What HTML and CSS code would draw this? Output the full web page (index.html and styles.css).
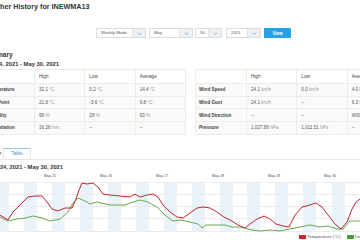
FILE: index.html
```html
<!DOCTYPE html>
<html lang="en">
<head>
    <meta charset="UTF-8">
    <title>Weather History for INEWMA13</title>
    <link rel="stylesheet" href="styles.css">
</head>
<body>
	<div class="page">
		<h1 class="title">Weather History for INEWMA13</h1>
		<div class="controls">
			<div class="select mode"><span>Weekly Mode</span><i><svg viewBox="0 0 8 5"><polyline points="1,1 4,4 7,1"/></svg></i></div>
			<div class="select month"><span>May</span><i><svg viewBox="0 0 8 5"><polyline points="1,1 4,4 7,1"/></svg></i></div>
			<div class="select day"><span>30</span><i><svg viewBox="0 0 8 5"><polyline points="1,1 4,4 7,1"/></svg></i></div>
			<div class="select year"><span>2021</span><i><svg viewBox="0 0 8 5"><polyline points="1,1 4,4 7,1"/></svg></i></div>
			<button class="view">View</button>
		</div>
		<h2 class="summary">Summary</h2>
		<h3 class="range">May 24, 2021 - May 30, 2021</h3>
		<div class="tables">
			<table class="stats">
				<tr class="head"><th></th><th>High</th><th>Low</th><th>Average</th></tr>
				<tr><td class="lbl">Temperature</td><td>32.1 <em>°C</em></td><td>0.2 <em>°C</em></td><td>14.4 <em>°C</em></td></tr>
				<tr><td class="lbl">Dew Point</td><td>21.8 <em>°C</em></td><td>-3.6 <em>°C</em></td><td>6.8 <em>°C</em></td></tr>
				<tr><td class="lbl">Humidity</td><td>99 <em>%</em></td><td>28 <em>%</em></td><td>63 <em>%</em></td></tr>
				<tr><td class="lbl">Precipitation</td><td>16.26 <em>mm</em></td><td>--</td><td>--</td></tr>
			</table>
			<table class="stats">
				<tr class="head"><th></th><th>High</th><th>Low</th><th>Average</th></tr>
				<tr><td class="lbl">Wind Speed</td><td>24.1 <em>km/h</em></td><td>0.0 <em>km/h</em></td><td>4.0 <em>km/h</em></td></tr>
				<tr><td class="lbl">Wind Gust</td><td>24.1 <em>km/h</em></td><td>--</td><td>6.3 <em>km/h</em></td></tr>
				<tr><td class="lbl">Wind Direction</td><td>--</td><td>--</td><td>WSW</td></tr>
				<tr><td class="lbl">Pressure</td><td>1,027.89 <em>hPa</em></td><td>1,011.51 <em>hPa</em></td><td>--</td></tr>
			</table>
		</div>
		<div class="tabs">
			<a class="tab current">Graph</a>
			<a class="tab boxed">Table</a>
		</div>
		<h4 class="chart-title">May 24, 2021 - May 30, 2021</h4>
		<div class="days">
			<span>May 24</span><span>May 25</span><span>May 26</span><span>May 27</span><span>May 28</span><span>May 29</span><span>May 30</span>
		</div>
		<svg class="plot" width="400" height="50" viewBox="-17 180 400 50">
			<g class="night">
				<rect x="-4" y="180" width="13" height="50"/><rect x="24" y="180" width="13" height="50"/>
				<rect x="52" y="180" width="13" height="50"/><rect x="80" y="180" width="13" height="50"/>
				<rect x="108" y="180" width="13" height="50"/><rect x="136" y="180" width="13" height="50"/>
				<rect x="164" y="180" width="13" height="50"/><rect x="192" y="180" width="13" height="50"/>
				<rect x="220" y="180" width="13" height="50"/><rect x="247" y="180" width="13" height="50"/>
				<rect x="275" y="180" width="13" height="50"/><rect x="303" y="180" width="13" height="50"/>
				<rect x="332" y="180" width="13" height="50"/>
			</g>
			<g class="grid">
				<line x1="-17" y1="180.5" x2="383" y2="180.5"/><line x1="-17" y1="192.5" x2="383" y2="192.5"/>
				<line x1="-17" y1="204.5" x2="383" y2="204.5"/><line x1="-17" y1="216.5" x2="383" y2="216.5"/>
				<line x1="-17" y1="229.5" x2="383" y2="229.5"/>
			</g>
			<polyline class="dew" points="0,215 8,219 17,217 25,216 33,214 42,216 50,219 60,217 68,210 73,201 78,196 85,199 90,202 97,200 110,203 125,203 130,201 140,198 148,200 157,205 165,213 173,219 180,218 190,220 198,222 202,226 206,223 217,223 225,223 232,225 240,225 252,228 260,229 270,228 280,229 290,227 300,225 310,223 320,225 328,224 337,227 343,227 350,219 360,219"/>
			<polyline class="temp" points="0,213 8,218 13,210 20,203 28,195 35,194 42,194 47,200 52,207 58,209 65,206 72,206 76,197 79,188 82,181 87,182 93,181 98,185 103,192 110,193 120,194 130,195 135,192 140,195 147,193 153,192 158,195 163,203 170,210 177,215 183,216 190,211 197,206 203,205 210,206 217,210 224,215 230,218 238,223 245,226 250,222 257,217 264,214 270,217 276,222 283,224 289,225 295,213 302,205 310,203 316,201 322,205 328,213 335,222 341,227 347,220 352,207 356,200 360,197"/>
		</svg>
		<div class="legend">
			<span class="key red"></span><span class="name">Temperature (°C)</span>
			<span class="key green"></span><span class="name">Dew Point (°C)</span>
		</div>
	</div>
</body>
</html>
```

FILE: styles.css
```css
	html, body {
		margin: 0;
		background: #fff;
		overflow: hidden;
	}
	body {
		font-family: "Liberation Sans", Arial, sans-serif;
		color: #333;
	}
	.page {
		margin-left: -17px;
		width: 420px;
	}
	.title {
		margin: 0;
		height: 14px;
		line-height: 14px;
		font-size: 7.2px;
		font-weight: bold;
		color: #333;
	}
	.controls {
		display: flex;
		gap: 3px;
		margin: 14px 0 0 113px;
		height: 10px;
	}
	.select {
		display: flex;
		border: 1px solid #dcdcdc;
		background: #fff;
		box-sizing: border-box;
		height: 10px;
	}
	.select span {
		flex: 1;
		font-size: 4.3px;
		line-height: 8px;
		padding-left: 4px;
		color: #555;
	}
	.select i {
		width: 12px;
		background: #eef1f4;
		border-left: 1px solid #e2e2e2;
		display: flex;
		align-items: center;
		justify-content: center;
	}
	.select svg {
		width: 5px;
		height: 3px;
		fill: none;
		stroke: #7f9fbd;
		stroke-width: 1.2;
	}
	.mode { width: 50px; }
	.month { width: 44px; }
	.day { width: 27px; margin-left: -1px; }
	.year { width: 35px; margin-left: 1px; }
	.view {
		width: 27px;
		height: 10px;
		border: 0;
		padding: 0;
		border-radius: 1px;
		background: #26a3e2;
		color: #fff;
		font-family: inherit;
		font-size: 4.5px;
		font-weight: bold;
	}
	.summary {
		margin: 12px 0 0;
		font-size: 6.5px;
		line-height: 9px;
		font-weight: bold;
	}
	.range {
		margin: 0;
		font-size: 5.8px;
		line-height: 10px;
		font-weight: bold;
	}
	.tables {
		display: flex;
		gap: 9px;
	}
	.stats {
		border-collapse: collapse;
		table-layout: fixed;
		width: 203px;
		font-size: 4.6px;
	}
	.stats th, .stats td {
		border: 1px solid #ececec;
		padding: 0 0 0 4px;
		text-align: left;
		white-space: nowrap;
		overflow: hidden;
		color: #555;
	}
	.stats th:first-child, .stats td:first-child {
		width: 46px;
	}
	.stats th {
		height: 13px;
		font-weight: normal;
		color: #444;
	}
	.stats td {
		height: 12.7px;
		box-sizing: border-box;
		background: #fafafa;
	}
	.stats td.lbl {
		font-weight: bold;
		color: #444;
		padding-left: 3px;
	}
	.stats em {
		font-style: normal;
		color: #9a9a9a;
	}
	.tabs {
		display: flex;
		margin-top: 13px;
		height: 11px;
		border-bottom: 1px solid #e6e6e6;
	}
	.tab {
		font-size: 4.8px;
		line-height: 11px;
		box-sizing: border-box;
	}
	.current {
		width: 20px;
		padding-left: 5px;
		color: #333;
	}
	.boxed {
		width: 28px;
		text-align: center;
		color: #3d8fc7;
		border-top: 1px solid #8fd0d6;
		border-left: 1px solid #e6e6e6;
		border-right: 1px solid #e6e6e6;
		line-height: 10px;
	}
	.chart-title {
		margin: 3px 0 0 4px;
		font-size: 5.8px;
		line-height: 8px;
		font-weight: bold;
	}
	.days {
		display: flex;
		margin-left: -17px;
		height: 10px;
		line-height: 10px;
	}
	.days span {
		width: 56px;
		flex: none;
		text-align: center;
		font-size: 3.7px;
		color: #555;
	}
	.plot {
		display: block;
		margin-top: 1px;
	}
	.night rect {
		fill: #eaf2fa;
	}
	.grid line {
		stroke: #ececec;
		stroke-width: 1;
	}
	.temp, .dew {
		fill: none;
		stroke-width: 1;
		stroke-linejoin: round;
	}
	.temp { stroke: #c0282f; }
	.dew { stroke: #6aa852; }
	.legend {
		display: flex;
		align-items: center;
		height: 10px;
		padding-left: 316px;
	}
	.key {
		width: 7px;
		height: 4px;
		margin-right: 1px;
	}
	.red { background: #c8282e; }
	.green { background: #4c9b3a; margin-left: 6px; }
	.name {
		font-size: 4.4px;
		color: #555;
		white-space: nowrap;
	}
```
